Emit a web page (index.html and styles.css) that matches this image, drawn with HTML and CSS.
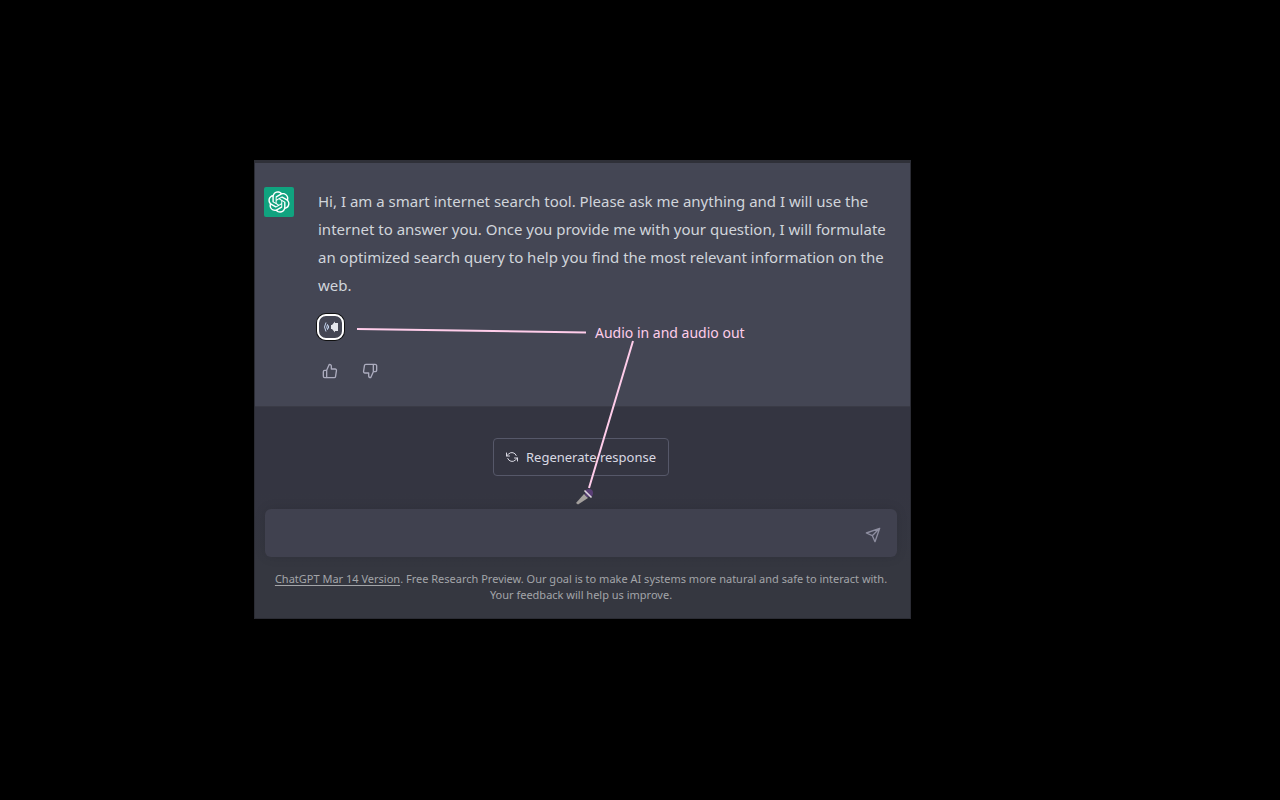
FILE: index.html
```html
<!DOCTYPE html>
<html lang="en">
<head>
<meta charset="utf-8">
<title>ChatGPT</title>
<link rel="stylesheet" href="styles.css">
</head>
<body>
<main class="panel">
  <section class="message">
    <div class="avatar">
      <svg viewBox="0 0 41 41" width="22" height="22" fill="currentColor" aria-hidden="true"><path d="M37.5324 16.8707C37.9808 15.5241 38.1363 14.0974 37.9886 12.6859C37.8409 11.2744 37.3934 9.91076 36.676 8.68622C35.6126 6.83404 33.9882 5.3676 32.0373 4.4985C30.0864 3.62941 27.9098 3.40259 25.8215 3.85078C24.8796 2.7893 23.7219 1.94125 22.4257 1.36341C21.1295 0.785575 19.7249 0.491269 18.3058 0.500197C16.1708 0.495044 14.0893 1.16803 12.3614 2.42214C10.6335 3.67624 9.34853 5.44666 8.6917 7.47815C7.30085 7.76286 5.98686 8.3414 4.8377 9.17505C3.68854 10.0087 2.73073 11.0782 2.02839 12.312C0.956464 14.1591 0.498905 16.2988 0.721698 18.4228C0.944492 20.5467 1.83612 22.5449 3.268 24.1293C2.81966 25.4759 2.66413 26.9026 2.81182 28.3141C2.95951 29.7256 3.40701 31.0892 4.12437 32.3138C5.18791 34.1659 6.8123 35.6322 8.76321 36.5013C10.7141 37.3704 12.8907 37.5973 14.9789 37.1492C15.9208 38.2107 17.0786 39.0587 18.3747 39.6366C19.6709 40.2144 21.0755 40.5087 22.4946 40.4998C24.6307 40.5054 26.7133 39.8321 28.4418 38.5772C30.1704 37.3223 31.4556 35.5506 32.1119 33.5179C33.5027 33.2332 34.8167 32.6547 35.9659 31.821C37.115 30.9874 38.0728 29.9178 38.7752 28.684C39.8458 26.8371 40.3023 24.6979 40.0789 22.5748C39.8556 20.4517 38.9639 18.4544 37.5324 16.8707ZM22.4978 37.8849C20.7443 37.8874 19.0459 37.2733 17.6994 36.1501C17.7601 36.117 17.8666 36.0586 17.936 36.0161L25.9004 31.4156C26.1003 31.3019 26.2663 31.137 26.3813 30.9378C26.4964 30.7386 26.5563 30.5124 26.5549 30.2825V19.0542L29.9213 20.998C29.9389 21.0068 29.9541 21.0198 29.9656 21.0359C29.977 21.052 29.9842 21.0707 29.9867 21.0902V30.3889C29.9842 32.375 29.1946 34.2791 27.7909 35.6841C26.3872 37.0892 24.4838 37.8806 22.4978 37.8849ZM6.39227 31.0064C5.51397 29.4888 5.19742 27.7107 5.49804 25.9832C5.55718 26.0187 5.66048 26.0818 5.73461 26.1244L13.699 30.7248C13.8975 30.8408 14.1233 30.902 14.3532 30.902C14.583 30.902 14.8088 30.8408 15.0073 30.7248L24.731 25.1103V28.9979C24.7321 29.0177 24.7283 29.0376 24.7199 29.0556C24.7115 29.0736 24.6988 29.0893 24.6829 29.1012L16.6317 33.7497C14.9096 34.7416 12.8643 35.0097 10.9447 34.4954C9.02506 33.9811 7.38785 32.7263 6.39227 31.0064ZM4.29707 13.6194C5.17156 12.0998 6.55279 10.9364 8.19885 10.3327C8.19885 10.4013 8.19491 10.5228 8.19491 10.6071V19.808C8.19351 20.0378 8.25334 20.2638 8.36823 20.4629C8.48312 20.6619 8.64893 20.8267 8.84863 20.9404L18.5723 26.5542L15.206 28.4979C15.1894 28.5089 15.1703 28.5155 15.1505 28.5173C15.1307 28.5191 15.1107 28.516 15.0924 28.5082L7.04046 23.8557C5.32135 22.8601 4.06716 21.2235 3.55289 19.3046C3.03862 17.3858 3.30624 15.3413 4.29707 13.6194ZM31.955 20.0556L22.2312 14.4411L25.5976 12.4981C25.6142 12.4872 25.6333 12.4805 25.6531 12.4787C25.6729 12.4769 25.6928 12.4801 25.7111 12.4879L33.7631 17.1364C34.9967 17.849 36.0017 18.8982 36.6606 20.1613C37.3194 21.4244 37.6047 22.849 37.4832 24.2684C37.3617 25.6878 36.8382 27.0432 35.9743 28.1759C35.1103 29.3086 33.9415 30.1717 32.6047 30.6641C32.6047 30.5947 32.6047 30.4733 32.6047 30.3889V21.188C32.6066 20.9586 32.5474 20.7328 32.4332 20.5338C32.319 20.3348 32.154 20.1698 31.955 20.0556ZM35.3055 15.0128C35.2464 14.9765 35.1431 14.9142 35.069 14.8717L27.1045 10.2712C26.906 10.1554 26.6803 10.0943 26.4504 10.0943C26.2206 10.0943 25.9948 10.1554 25.7963 10.2712L16.0726 15.8858V11.9982C16.0715 11.9783 16.0753 11.9585 16.0837 11.9405C16.0921 11.9225 16.1048 11.9068 16.1207 11.8949L24.1719 7.25025C25.4053 6.53903 26.8158 6.19376 28.2383 6.25482C29.6608 6.31589 31.0364 6.78077 32.2044 7.59508C33.3723 8.40939 34.2842 9.53945 34.8334 10.8531C35.3826 12.1667 35.5464 13.6095 35.3055 15.0128ZM14.2424 21.9419L10.8752 19.9981C10.8576 19.9893 10.8423 19.9763 10.8309 19.9602C10.8195 19.9441 10.8122 19.9254 10.8098 19.9058V10.6071C10.8107 9.18295 11.2173 7.78848 11.9819 6.58696C12.7466 5.38544 13.8377 4.42659 15.1275 3.82264C16.4173 3.21869 17.8524 2.99464 19.2649 3.1767C20.6775 3.35876 22.0089 3.93941 23.1034 4.85067C23.0427 4.88379 22.937 4.94215 22.8668 4.98473L14.9024 9.58517C14.7025 9.69878 14.5366 9.86356 14.4215 10.0626C14.3065 10.2616 14.2466 10.4877 14.2479 10.7175L14.2424 21.9419ZM16.071 17.9991L20.4018 15.4978L24.7325 17.9975V22.9985L20.4018 25.4983L16.071 22.9985V17.9991Z"/></svg>
    </div>
    <div class="body">
      <p class="text">Hi, I am a smart internet search tool. Please ask me anything and I will use the internet to answer you. Once you provide me with your question, I will formulate an optimized search query to help you find the most relevant information on the web.</p>
      <button class="speak" type="button" aria-label="Read aloud">
        <svg viewBox="0 0 16 14" width="16" height="14" aria-hidden="true"><path d="M8 5h1l3-3.500v1.500h3v8h-3v1.500L9 9H8z" fill="#e4e6ec"/><path d="M4.500 4.500q2.500 2.500 0 5M4.500 4.500q-1.500 2.500 0 5M3 2.500q-3 4.500 0 9" fill="none" stroke="#c3d3ee"/></svg>
      </button>
      <div class="votes">
        <button class="vote" type="button" aria-label="Good response"><svg class="line-icon" viewBox="0 0 24 24" width="16" height="16"><path d="M14 9V5a3 3 0 0 0-3-3l-4 9v11h11.280a2 2 0 0 0 2-1.700l1.380-9a2 2 0 0 0-2-2.300zM7 22H4a2 2 0 0 1-2-2v-7a2 2 0 0 1 2-2h3"/></svg></button>
        <button class="vote" type="button" aria-label="Bad response"><svg class="line-icon" viewBox="0 0 24 24" width="16" height="16"><path d="M10 15v4a3 3 0 0 0 3 3l4-9V2H5.720a2 2 0 0 0-2 1.700l-1.380 9a2 2 0 0 0 2 2.300zm7-13h2.670A2.310 2.310 0 0 1 22 4v7a2.310 2.310 0 0 1-2.330 2H17"/></svg></button>
      </div>
    </div>
  </section>
  <section class="composer">
    <button class="regenerate" type="button">
      <svg class="line-icon" viewBox="0 0 24 24" width="12" height="12" aria-hidden="true"><path d="M1 4v6h6M23 20v-6h-6M20.490 9A9 9 0 0 0 5.640 5.640L1 10m22 4l-4.640 4.360A9 9 0 0 1 3.510 15"/></svg>
      Regenerate response
    </button>
    <button class="mic" type="button" aria-label="Voice input">
      <svg viewBox="0 0 18 18" width="18" height="18" aria-hidden="true"><path d="M0 16L8 7l4 4L2 17.500z" fill="#a5a19e"/><circle cx="13" cy="6" r="4" fill="#593e75"/><path d="M8.500 3.500l7 7" stroke="#ddd5df" stroke-width="1.600"/></svg>
    </button>
    <form class="prompt">
      <input class="field" type="text" aria-label="Message">
      <button class="send" type="button" aria-label="Send"><svg class="line-icon" viewBox="0 0 24 24" width="16" height="16"><path d="M22 2L11 13M22 2l-7 20-4-9-9-4z"/></svg></button>
    </form>
    <p class="notice"><a class="version" href="#">ChatGPT Mar 14 Version</a>. Free Research Preview. Our goal is to make AI systems more natural and safe to interact with. Your feedback will help us improve.</p>
  </section>
  <div class="annotation">
    <svg viewBox="0 0 500 340" width="500" height="340" aria-hidden="true"><path d="M103 169L332 172.500M379 181L335 328" fill="none" stroke="#ffcdea" stroke-width="2"/></svg>
    <span class="label">Audio in and audio out</span>
  </div>
</main>
</body>
</html>
```
FILE: styles.css
```css
* { box-sizing: border-box; }
body {
  margin: 0;
  padding: 160px 369px 0 254px;
  background: #000;
  color: #d1d5db;
  font-family: "Segoe UI", "Noto Sans", sans-serif;
  font-size: 15px;
}
button { padding: 0; border: 0; background: none; color: inherit; font: inherit; }
p { margin: 0; }
svg { display: block; }
.panel {
  position: relative;
  border: 1px solid #2b2c34;
  border-top: 3px solid #2f3038;
  background: #343541;
}
.message {
  display: flex;
  gap: 24px;
  padding: 24px 20px 23px 9px;
  background: #444654;
  border-bottom: 1px solid #3a3b46;
}
.avatar {
  display: grid;
  flex: none;
  place-items: center;
  width: 30px;
  height: 30px;
  border-radius: 2px;
  background: #10a37f;
  color: #fff;
}
.body { flex: 1; }
.text { line-height: 28px; }
.speak {
  display: grid;
  place-items: center;
  width: 27px;
  height: 26px;
  margin: 15px 0 0 -1px;
  border: 2px solid #fff;
  border-radius: 9px;
  box-shadow: 0 0 0 1px #111;
}
.votes { display: flex; gap: 16px; margin-top: 19px; }
.vote { padding: 4px; color: #acacbe; }
.line-icon { fill: none; stroke: currentColor; stroke-width: 2; stroke-linecap: round; stroke-linejoin: round; }
.composer {
  display: flex;
  flex-direction: column;
  align-items: center;
  padding: 31px 13px 15px 10px;
  background: linear-gradient(#343541 40%, #353740 75%);
}
.regenerate {
  display: flex;
  align-items: center;
  gap: 8px;
  height: 38px;
  padding: 0 12px;
  border: 1px solid #565869;
  border-radius: 4px;
  color: #d9d9e3;
  font-size: 13px;
}
.mic { margin: 11px 0 4px 8px; }
.prompt {
  display: flex;
  align-items: center;
  width: 100%;
  height: 48px;
  padding: 3px 16px 0;
  border-radius: 6px;
  background: #40414f;
  box-shadow: 0 0 12px rgba(0, 0, 0, .1);
}
.field { flex: 1; min-width: 0; border: 0; outline: 0; background: none; color: inherit; font: inherit; }
.send { color: #8e8ea0; }
.notice { padding-top: 14px; color: #a3a5a9; font-size: 11px; line-height: 16px; text-align: center; }
.version { color: inherit; text-underline-offset: 2px; }
.annotation { position: absolute; top: -3px; left: -1px; pointer-events: none; }
.label { position: absolute; top: 163px; left: 341px; color: #ffcdea; font-size: 14px; line-height: 20px; white-space: nowrap; }
```
